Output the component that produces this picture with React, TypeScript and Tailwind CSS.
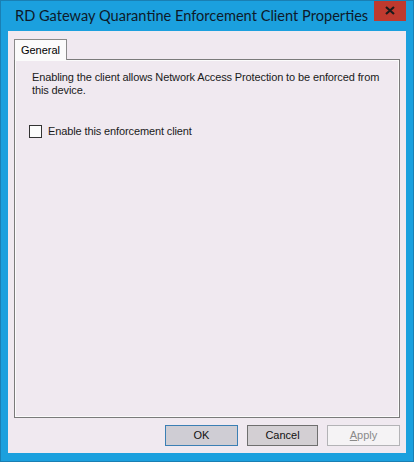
export default function App() {
  return (
    <div className="w-[414px] h-[462px] bg-[#1ba0de] border border-[#1a7fb3] flex flex-col overflow-hidden" style={{ fontFamily: '"Liberation Sans", Arial, sans-serif' }}>
      <div className="h-[30px] flex items-start shrink-0 relative">
        <div className="pl-[14px] pt-[5px] text-[14.6px] leading-[20px] text-[#0e1a2a] whitespace-nowrap" style={{ fontFamily: 'Lato, "Noto Sans", sans-serif' }}>
          RD Gateway Quarantine Enforcement Client Properties
        </div>
        <div className="absolute left-[373px] top-[-1px] w-[32px] h-[21px] bg-[#bf3a2f] flex items-center justify-center">
          <svg width="10" height="9" viewBox="0 0 10 9">
            <path d="M1 1 L9 8 M9 1 L1 8" stroke="#1b1b1b" strokeWidth="2.2" />
          </svg>
        </div>
      </div>
      <div className="flex-1 mx-[7px] mb-[8px] bg-[#f0e9f0] flex flex-col px-[6px] pt-[7px]">
        <div className="flex">
          <div className="h-[21px] w-[53px] bg-[#fbfbfb] border border-b-0 border-[#8a8a8a] text-[11px] text-black flex items-center justify-center relative top-[1px] z-10">
            General
          </div>
        </div>
        <div className="h-[359px] w-[386px] border border-[#7a7a7a] bg-[#f0e9f0]">
          <div className="h-full w-full border border-[#fbfbfb] px-[16px] pt-[10px]">
            <div className="text-[11px] leading-[13px] text-[#1a1a1a] w-[360px] tracking-[-0.12px]">
              Enabling the client allows Network Access Protection to be enforced from this device.
            </div>
            <div className="flex items-center mt-[26px] -ml-[3px]">
              <div className="w-[13px] h-[13px] border border-[#333] bg-[#fcfcfc]" />
              <span className="ml-[6px] text-[11px] text-[#1a1a1a] tracking-[-0.12px]">Enable this enforcement client</span>
            </div>
          </div>
        </div>
        <div className="flex justify-end gap-[9px] mt-[7px] pr-[0px]">
          <div className="w-[73px] h-[21px] border border-[#3b7fb4] bg-[#cfcdd4] text-[11px] text-[#111] flex items-center justify-center">OK</div>
          <div className="w-[71px] h-[21px] border border-[#6f6f6f] bg-[#d3cfd3] text-[11px] text-[#111] flex items-center justify-center">Cancel</div>
          <div className="w-[73px] h-[21px] border border-[#b3b3b6] bg-[#f5f3f5] text-[11px] text-[#8a8a8a] flex items-center justify-center"><span><span className="underline">A</span>pply</span></div>
        </div>
      </div>
    </div>
  );
}
